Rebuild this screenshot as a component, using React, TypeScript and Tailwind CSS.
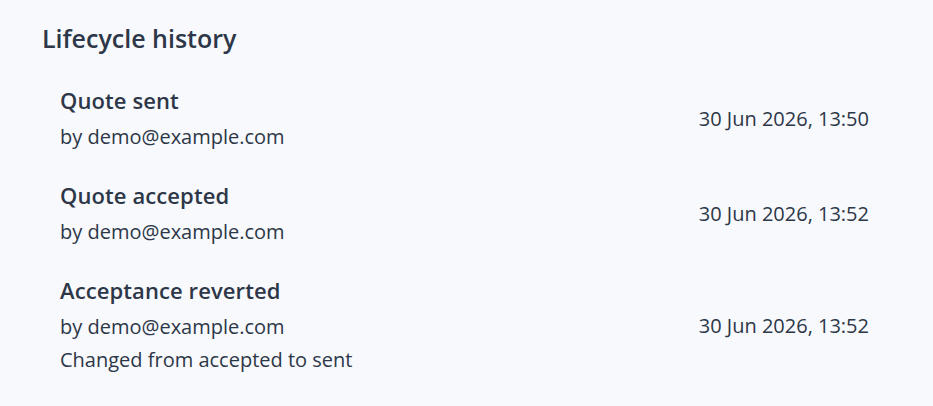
const events = [
  { title: 'Quote sent', by: 'demo@example.com', at: '30 Jun 2026, 13:50' },
  { title: 'Quote accepted', by: 'demo@example.com', at: '30 Jun 2026, 13:52' },
  {
    title: 'Acceptance reverted',
    by: 'demo@example.com',
    at: '30 Jun 2026, 13:52',
    note: 'Changed from accepted to sent',
  },
];

export default function App() {
  return (
    <div className="min-h-screen bg-[#f7f9fc] px-[42px] pt-[22px] text-[#2d3748] font-['Open_Sans',sans-serif]">
      <h2 className="text-[25px] leading-[32px] font-semibold">Lifecycle history</h2>
      <ul className="mt-[31px] space-y-[27px]">
        {events.map((ev, i) => (
          <li key={i} className="flex items-center justify-between pl-[18px] pr-[22px]">
            <div>
              <div className="text-[22px] leading-[30px] font-semibold tracking-[0.1px]">{ev.title}</div>
              <div className="mt-[5px] text-[20px] leading-[33px]">by {ev.by}</div>
              {ev.note && <div className="text-[20px] leading-[33px]">{ev.note}</div>}
            </div>
            <div className="text-[20px] leading-[28px]">{ev.at}</div>
          </li>
        ))}
      </ul>
    </div>
  );
}
